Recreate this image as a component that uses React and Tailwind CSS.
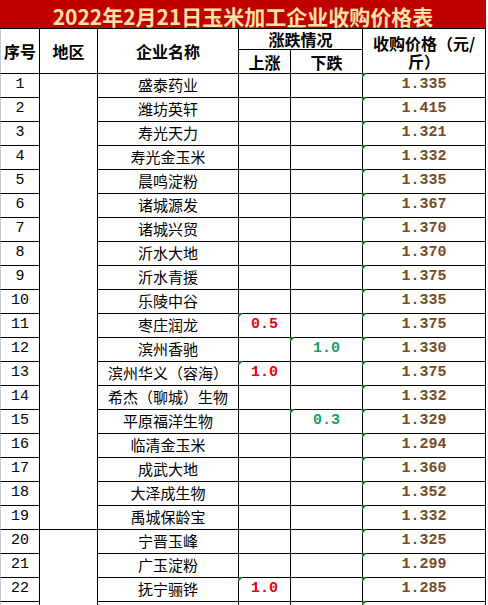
import React from "react";

const rows = [
  ["1", "盛泰药业", "", "", "1.335"],
  ["2", "潍坊英轩", "", "", "1.415"],
  ["3", "寿光天力", "", "", "1.321"],
  ["4", "寿光金玉米", "", "", "1.332"],
  ["5", "晨鸣淀粉", "", "", "1.335"],
  ["6", "诸城源发", "", "", "1.367"],
  ["7", "诸城兴贸", "", "", "1.370"],
  ["8", "沂水大地", "", "", "1.370"],
  ["9", "沂水青援", "", "", "1.375"],
  ["10", "乐陵中谷", "", "", "1.335"],
  ["11", "枣庄润龙", "0.5", "", "1.375"],
  ["12", "滨州香驰", "", "1.0", "1.330"],
  ["13", "滨州华义（容海）", "1.0", "", "1.375"],
  ["14", "希杰（聊城）生物", "", "", "1.332"],
  ["15", "平原福洋生物", "", "0.3", "1.329"],
  ["16", "临清金玉米", "", "", "1.294"],
  ["17", "成武大地", "", "", "1.360"],
  ["18", "大泽成生物", "", "", "1.352"],
  ["19", "禹城保龄宝", "", "", "1.332"],
  ["20", "宁晋玉峰", "", "", "1.325"],
  ["21", "广玉淀粉", "", "", "1.299"],
  ["22", "抚宁骊铧", "1.0", "", "1.285"],
  ["", "", "", "", ""],
];

const cjk = "font-['Noto_Sans_CJK_SC',sans-serif]";
const mono = "font-['Liberation_Mono',monospace]";

function Tri() {
  return (
    <span className="absolute -top-px -left-px z-10 w-0 h-0 border-t-[5px] border-r-[5px] border-t-[#1f7a1f] border-r-transparent" />
  );
}

const cell =
  "relative flex items-center justify-center border-r border-b border-black";

export default function App() {
  const body = [];
  rows.forEach((r, i) => {
    const [idx, name, up, down, price] = r;
    body.push(
      <div
        key={"i" + i}
        className={`${cell} border-l border-l-[#c3c9d4] ${mono} text-[15px] text-black`}
      >
        {idx}
      </div>
    );
    if (i === 0) {
      body.push(<div key="reg1" className={`${cell} row-span-19`} />);
    }
    if (i === 19) {
      body.push(<div key="reg2" className={`${cell} row-span-4`} />);
    }
    body.push(
      <div key={"n" + i} className={`${cell} ${cjk} text-[15px] text-black`}>
        {name}
      </div>
    );
    body.push(
      <div
        key={"u" + i}
        className={`${cell} ${mono} text-[15px] font-bold text-[#e60012]`}
      >
        {up && <Tri />}
        {up}
      </div>
    );
    body.push(
      <div
        key={"d" + i}
        className={`${cell} ${mono} text-[15px] font-bold text-[#12a067]`}
      >
        {down && <Tri />}
        {down}
      </div>
    );
    body.push(
      <div
        key={"p" + i}
        className={`${cell} ${mono} text-[15px] font-bold text-[#7a4a1f]`}
      >
        <Tri />
        {price}
      </div>
    );
  });

  return (
    <div className="w-[488px] h-[605px] overflow-hidden bg-white">
      <div className="grid w-[486px] grid-cols-[40px_58px_141px_52px_72px_123px] grid-rows-[29px_21px_24px] auto-rows-[24px]">
        <div
          className={`col-span-6 flex items-center justify-center bg-[#c00000] border-b border-black ${cjk} text-[21px] leading-none font-bold text-[#ffe1a8] pt-[4px]`}
        >
          2022年2月21日玉米加工企业收购价格表
        </div>
        <div
          className={`${cell} row-span-2 border-l border-l-[#c3c9d4] ${cjk} text-[16px] font-bold`}
        >
          序号
        </div>
        <div className={`${cell} row-span-2 ${cjk} text-[16px] font-bold`}>
          地区
        </div>
        <div className={`${cell} row-span-2 ${cjk} text-[16px] font-bold`}>
          企业名称
        </div>
        <div className={`${cell} col-span-2 ${cjk} text-[16px] leading-none font-bold`}>
          涨跌情况
        </div>
        <div
          className={`${cell} row-span-2 ${cjk} text-[16px] font-bold leading-[18px] text-center pt-[2px]`}
        >
          收购价格（元/
          <br />
          斤）
        </div>
        <div className={`${cell} ${cjk} text-[16px] font-bold`}>上涨</div>
        <div className={`${cell} ${cjk} text-[16px] font-bold`}>下跌</div>
        {body}
      </div>
    </div>
  );
}
